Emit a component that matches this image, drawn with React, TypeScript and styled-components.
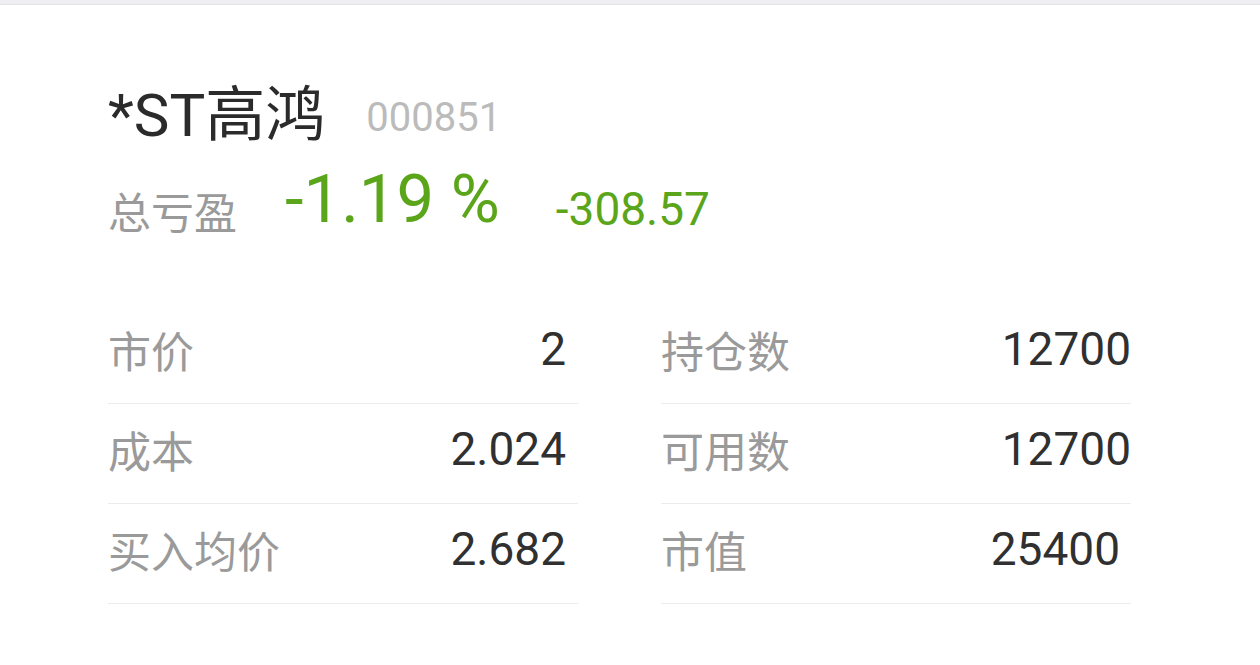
import React from 'react';
import styled, { createGlobalStyle } from 'styled-components';

const GlobalStyle = createGlobalStyle`
  html, body {
    margin: 0;
    padding: 0;
    background: #fff;
  }
  body {
    font-family: Roboto, "Noto Sans CJK SC", sans-serif;
  }
`;

const TopBar = styled.div`
  height: 4px;
  background-color: #efeef3;
  border-bottom: 1px solid #e4e3e8;
`;

const Card = styled.div`
  padding: 81px 108px 0;
`;

const TitleLine = styled.div`
  line-height: 60px;
  white-space: nowrap;
`;

const StockName = styled.span`
  font-size: 60px;
  color: #2b2b2b;
`;

const StockCode = styled.span`
  font-size: 40px;
  color: #bbbbbb;
  margin-left: 41px;
  vertical-align: 5px;
`;

const ProfitLine = styled.div`
  margin-top: 3px;
  line-height: 70px;
  white-space: nowrap;
`;

const ProfitLabel = styled.span`
  font-size: 43px;
  color: #9a9a9a;
`;

const ProfitValue = styled.span<{ size: number; gap: number; lift: number }>`
  font-size: ${({ size }) => size}px;
  color: #5ba51a;
  margin-left: ${({ gap }) => gap}px;
  vertical-align: ${({ lift }) => lift}px;
`;

const StatsGrid = styled.div`
  display: grid;
  grid-template-columns: 470px 470px;
  column-gap: 83px;
  margin-top: 45px;
`;

const StatRow = styled.div<{ padRight: number }>`
  box-sizing: border-box;
  height: 100px;
  padding-bottom: 10px;
  border-bottom: 1px solid #ececec;
  display: flex;
  align-items: center;
  justify-content: space-between;
  padding-right: ${({ padRight }) => padRight}px;
`;

const StatLabel = styled.span`
  font-size: 43px;
  color: #9a9a9a;
`;

const StatValue = styled.span`
  font-size: 46px;
  color: #303030;
`;

const rows: { label: string; value: string; pad: number }[][] = [
  [
    { label: '市价', value: '2', pad: 12 },
    { label: '持仓数', value: '12700', pad: 0 },
  ],
  [
    { label: '成本', value: '2.024', pad: 12 },
    { label: '可用数', value: '12700', pad: 0 },
  ],
  [
    { label: '买入均价', value: '2.682', pad: 12 },
    { label: '市值', value: '25400', pad: 11 },
  ],
];

const App: React.FC = () => {
  return (
    <>
      <GlobalStyle />
      <TopBar />
      <Card>
        <TitleLine>
          <StockName>*ST高鸿</StockName>
          <StockCode>000851</StockCode>
        </TitleLine>
        <ProfitLine>
          <ProfitLabel>总亏盈</ProfitLabel>
          <ProfitValue size={67} gap={48} lift={7}>-1.19 %</ProfitValue>
          <ProfitValue size={46} gap={56} lift={4}>-308.57</ProfitValue>
        </ProfitLine>
        <StatsGrid>
          {rows.map(pair =>
            pair.map(item => (
              <StatRow key={item.label} padRight={item.pad}>
                <StatLabel>{item.label}</StatLabel>
                <StatValue>{item.value}</StatValue>
              </StatRow>
            ))
          )}
        </StatsGrid>
      </Card>
    </>
  );
};

export default App;
